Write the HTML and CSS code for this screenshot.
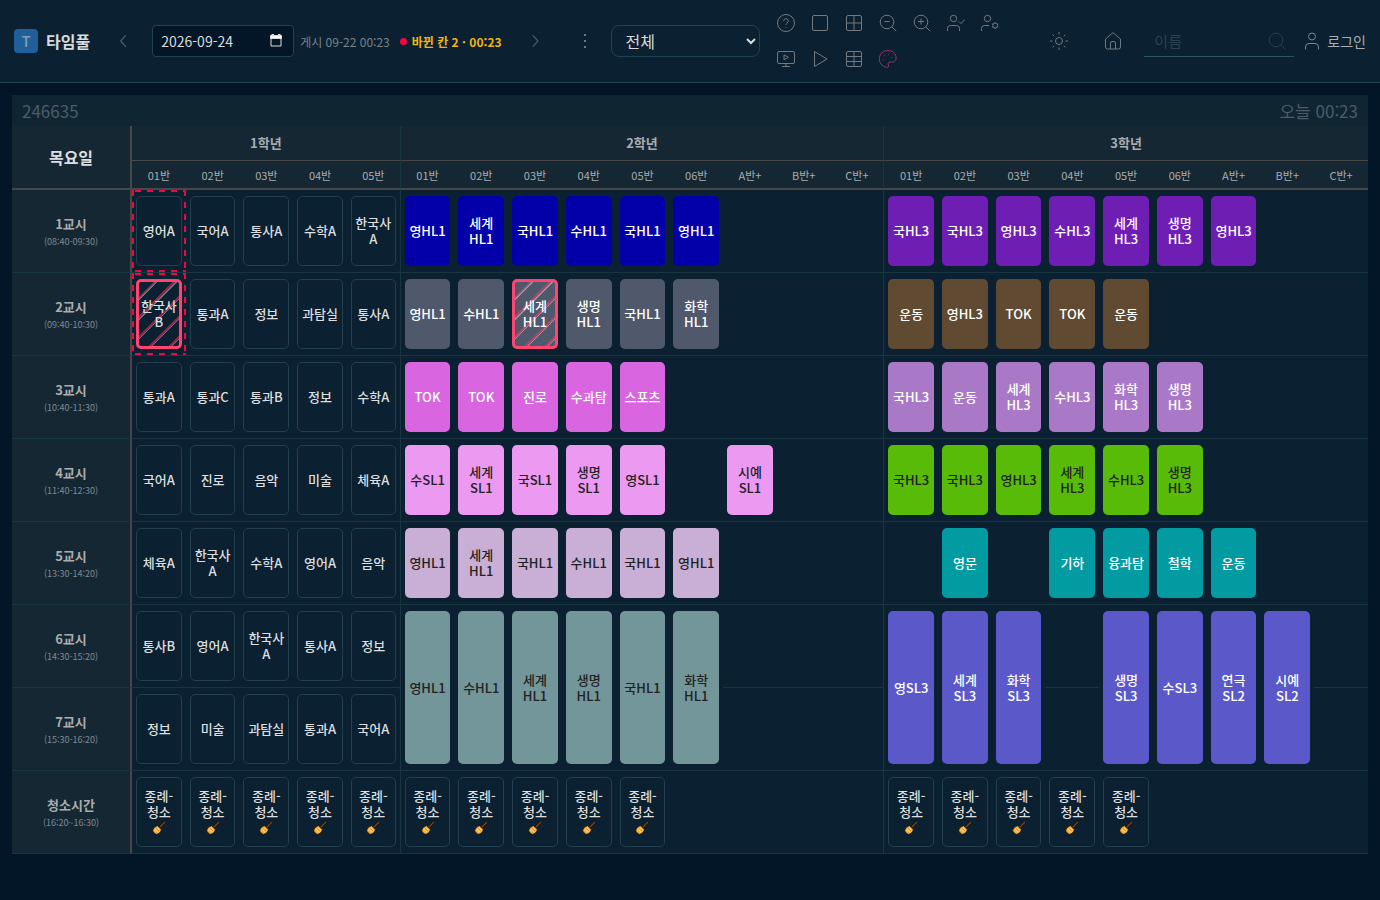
FILE: index.html
```html
<!DOCTYPE html>
<html lang="ko">
<head>
<meta charset="utf-8">
<meta name="viewport" content="width=device-width, initial-scale=1">
<title>타임풀</title>
<link rel="stylesheet" href="styles.css">
</head>
<body>
<svg class="defs" aria-hidden="true">
  <symbol id="broom" viewBox="0 0 14 14"><path d="M7.500 6.500 13 1" fill="none" stroke="#1b120b" stroke-width="2.600"/><path d="M7.500 6.500 13 1" fill="none" stroke="#7a4520" stroke-width="1.200"/><path d="M5.500 4.800 9.300 8.500c-.3 2.500-2.600 4.600-4.800 4.800C2.600 12.800 1 11 .7 9.300 1.500 7 3.500 5.300 5.500 4.800z" fill="#f7b43c" stroke="#20160c" stroke-width=".8"/><path d="m4.800 6.300 3 3M3 8l3 3" fill="none" stroke="#ffdc78" stroke-width="1"/><path d="m4 7.200 3 3" fill="none" stroke="#ee8236" stroke-width="1"/></symbol>
</svg>
<header class="topbar">
  <a class="brand" href="#"><span class="logo">T</span><span>타임풀</span></a>
  <div class="datenav">
    <button class="iconbtn" type="button" aria-label="이전"><svg class="arrow" viewBox="0 0 24 24"><path d="M17 2 8 12l9 10"/></svg></button>
    <div class="datebox">
      <input class="date" type="text" value="2026-09-24" aria-label="날짜">
      <button class="pick" type="button" aria-label="달력 열기"><svg viewBox="0 0 12 13"><path d="M1 2h10v10H1z" fill="none" stroke="#dedede"/><path d="M.5 1.500h11v3H.5zM2 0h1.500v2H2zM8.500 0H10v2H8.500z" fill="#fff"/></svg></button>
    </div>
    <span class="posted">게시 09-22 00:23</span>
    <span class="changed">바뀐 칸 2 · 00:23</span>
    <button class="iconbtn next" type="button" aria-label="다음"><svg class="arrow" viewBox="0 0 24 24"><path d="m8 2 9 10-9 10"/></svg></button>
  </div>
  <button class="iconbtn more" type="button" aria-label="더보기"><svg viewBox="0 0 18 18"><path d="M8 2h2v2H8zM8 8h2v2H8zM8 14h2v2H8z" fill="currentColor" stroke="none"/></svg></button>
  <select class="scope" aria-label="보기 범위"><option>전체</option></select>
  <div class="tools">
    <button type="button" aria-label="도움말"><svg viewBox="0 0 18 18"><circle cx="9" cy="9" r="8.500"/><path d="M6.700 7a2.300 2.300 0 1 1 3.500 1.900C9.300 9.500 9 9.900 9 11M9 12.800v.9"/></svg></button>
    <button type="button" aria-label="한 칸 보기"><svg viewBox="0 0 18 18"><rect x="1.500" y="1.500" width="15" height="15" rx="1.500"/></svg></button>
    <button type="button" aria-label="네 칸 보기"><svg viewBox="0 0 18 18"><rect x="1.500" y="1.500" width="15" height="15" rx="1.500"/><path d="M9 1.500v15M1.500 9h15"/></svg></button>
    <button type="button" aria-label="축소"><svg viewBox="0 0 18 18"><circle cx="8" cy="8" r="6.800"/><path d="m12.900 12.900 4.300 4.300M5.500 7.500h5"/></svg></button>
    <button type="button" aria-label="확대"><svg viewBox="0 0 18 18"><circle cx="8" cy="8" r="6.800"/><path d="m12.900 12.900 4.300 4.300M5 7.500h6M8 4.500v6"/></svg></button>
    <button type="button" aria-label="출석"><svg viewBox="0 0 18 18"><circle cx="6.500" cy="4.500" r="3.200"/><path d="M.5 17v-2.500a3 3 0 0 1 3-3h6a3 3 0 0 1 3 3V17M12 7.500l2 2 3.700-4"/></svg></button>
    <button type="button" aria-label="사용자 설정"><svg viewBox="0 0 18 18"><circle cx="6.500" cy="4.500" r="3.200"/><path d="M.5 17v-2.500a3 3 0 0 1 3-3h4.500"/><circle cx="14.200" cy="11.500" r="2.500"/><path d="M14.200 8v1M14.200 14v1M11.200 9.800l1 .6M16.300 12.600l1 .6M11.200 13.200l1-.6M16.300 10.400l1-.6"/></svg></button>
    <button type="button" aria-label="발표 화면"><svg viewBox="0 0 18 18"><rect x=".5" y="1.500" width="17" height="12" rx="1.500"/><path d="M9 13.500v3M5 16.500h8M7 4.800v5l4.300-2.500z"/></svg></button>
    <button type="button" aria-label="재생"><svg viewBox="0 0 18 18"><path d="M3.500 1.500v15L16 9z"/></svg></button>
    <button type="button" aria-label="표 보기"><svg viewBox="0 0 18 18"><rect x="1.500" y="1.500" width="15" height="15" rx="1.500"/><path d="M9 1.500v15M1.500 6.500h15M1.500 11.500h15"/></svg></button>
    <button class="palette" type="button" aria-label="색상"><svg viewBox="0 0 18 18"><path d="M9 .5a8.500 8.500 0 0 0-1.500 16.900c1.200.2 2-.3 2-1.400 0-1.400-1-2.800.4-3.600 1.400-.9 3.600.3 5.500-.9C19.200 8.900 16.700.5 9 .5z"/><path d="M4.200 9.500v1M5.500 5.300v1M9.500 3.800v1M13 7v1"/></svg></button>
  </div>
  <div class="right">
    <button class="iconbtn" type="button" aria-label="밝기"><svg viewBox="0 0 18 18"><circle cx="9" cy="9" r="3.500"/><path d="M9 0v2.500M9 15.500V18M0 9h2.500M15.500 9H18M2.600 2.600l1.600 1.600M13.800 13.800l1.600 1.600M2.600 15.400l1.600-1.600M13.800 4.200l1.600-1.600"/></svg></button>
    <a class="iconbtn home" href="#" aria-label="홈"><svg viewBox="0 0 18 18"><path d="M1.500 7v8a2 2 0 0 0 2 2h11a2 2 0 0 0 2-2V7L9 .700zM6.500 17v-6a1.500 1.500 0 0 1 1.500-1.500h2a1.500 1.500 0 0 1 1.500 1.500v6"/></svg></a>
    <div class="search">
      <input type="text" placeholder="이름" aria-label="이름 검색">
      <svg viewBox="0 0 18 18"><circle cx="8" cy="8" r="6.800"/><path d="m12.900 12.900 4.300 4.300"/></svg>
    </div>
    <a class="login" href="#"><svg viewBox="0 0 14 18"><circle cx="7" cy="4.500" r="3.500"/><path d="M.5 17.500V15a3.500 3.500 0 0 1 3.500-3.500h6a3.500 3.500 0 0 1 3.500 3.500v2.500"/></svg><span>로그인</span></a>
  </div>
</header>

<main class="board">
  <div class="meta"><span>246635</span><span>오늘 00:23</span></div>
  <table class="grid">
    <colgroup><col class="periodcol"><col span="23"></colgroup>
    <thead>
      <tr class="grades"><th class="day" rowspan="2">목요일</th><th class="end" colspan="5">1학년</th><th class="end" colspan="9">2학년</th><th colspan="9">3학년</th></tr>
      <tr class="classes"><th>01반</th><th>02반</th><th>03반</th><th>04반</th><th class="end">05반</th><th>01반</th><th>02반</th><th>03반</th><th>04반</th><th>05반</th><th>06반</th><th>A반+</th><th>B반+</th><th class="end">C반+</th><th>01반</th><th>02반</th><th>03반</th><th>04반</th><th>05반</th><th>06반</th><th>A반+</th><th>B반+</th><th>C반+</th></tr>
    </thead>
    <tbody>
      <tr>
        <th>1교시<small>(08:40-09:30)</small></th>
        <td class="mark"><div class="card">영어A</div></td><td><div class="card">국어A</div></td><td><div class="card">통사A</div></td><td><div class="card">수학A</div></td><td class="end"><div class="card">한국사<br>A</div></td>
        <td><div class="card blue">영HL1</div></td><td><div class="card blue">세계<br>HL1</div></td><td><div class="card blue">국HL1</div></td><td><div class="card blue">수HL1</div></td><td><div class="card blue">국HL1</div></td><td><div class="card blue">영HL1</div></td><td></td><td></td><td class="end"></td>
        <td><div class="card purple">국HL3</div></td><td><div class="card purple">국HL3</div></td><td><div class="card purple">영HL3</div></td><td><div class="card purple">수HL3</div></td><td><div class="card purple">세계<br>HL3</div></td><td><div class="card purple">생명<br>HL3</div></td><td><div class="card purple">영HL3</div></td><td></td><td></td>
      </tr>
      <tr>
        <th>2교시<small>(09:40-10:30)</small></th>
        <td class="mark"><div class="card swapped">한국사<br>B</div></td><td><div class="card">통과A</div></td><td><div class="card">정보</div></td><td><div class="card">과탐실</div></td><td class="end"><div class="card">통사A</div></td>
        <td><div class="card slate">영HL1</div></td><td><div class="card slate">수HL1</div></td><td><div class="card slate swapped">세계<br>HL1</div></td><td><div class="card slate">생명<br>HL1</div></td><td><div class="card slate">국HL1</div></td><td><div class="card slate">화학<br>HL1</div></td><td></td><td></td><td class="end"></td>
        <td><div class="card brown">운동</div></td><td><div class="card brown">영HL3</div></td><td><div class="card brown">TOK</div></td><td><div class="card brown">TOK</div></td><td><div class="card brown">운동</div></td><td></td><td></td><td></td><td></td>
      </tr>
      <tr>
        <th>3교시<small>(10:40-11:30)</small></th>
        <td><div class="card">통과A</div></td><td><div class="card">통과C</div></td><td><div class="card">통과B</div></td><td><div class="card">정보</div></td><td class="end"><div class="card">수학A</div></td>
        <td><div class="card orchid">TOK</div></td><td><div class="card orchid">TOK</div></td><td><div class="card orchid">진로</div></td><td><div class="card orchid">수과탐</div></td><td><div class="card orchid">스포츠</div></td><td></td><td></td><td></td><td class="end"></td>
        <td><div class="card violet">국HL3</div></td><td><div class="card violet">운동</div></td><td><div class="card violet">세계<br>HL3</div></td><td><div class="card violet">수HL3</div></td><td><div class="card violet">화학<br>HL3</div></td><td><div class="card violet">생명<br>HL3</div></td><td></td><td></td><td></td>
      </tr>
      <tr>
        <th>4교시<small>(11:40-12:30)</small></th>
        <td><div class="card">국어A</div></td><td><div class="card">진로</div></td><td><div class="card">음악</div></td><td><div class="card">미술</div></td><td class="end"><div class="card">체육A</div></td>
        <td><div class="card pink">수SL1</div></td><td><div class="card pink">세계<br>SL1</div></td><td><div class="card pink">국SL1</div></td><td><div class="card pink">생명<br>SL1</div></td><td><div class="card pink">영SL1</div></td><td></td><td><div class="card pink">시예<br>SL1</div></td><td></td><td class="end"></td>
        <td><div class="card green">국HL3</div></td><td><div class="card green">국HL3</div></td><td><div class="card green">영HL3</div></td><td><div class="card green">세계<br>HL3</div></td><td><div class="card green">수HL3</div></td><td><div class="card green">생명<br>HL3</div></td><td></td><td></td><td></td>
      </tr>
      <tr>
        <th>5교시<small>(13:30-14:20)</small></th>
        <td><div class="card">체육A</div></td><td><div class="card">한국사<br>A</div></td><td><div class="card">수학A</div></td><td><div class="card">영어A</div></td><td class="end"><div class="card">음악</div></td>
        <td><div class="card mauve">영HL1</div></td><td><div class="card mauve">세계<br>HL1</div></td><td><div class="card mauve">국HL1</div></td><td><div class="card mauve">수HL1</div></td><td><div class="card mauve">국HL1</div></td><td><div class="card mauve">영HL1</div></td><td></td><td></td><td class="end"></td>
        <td></td><td><div class="card teal">영문</div></td><td></td><td><div class="card teal">기하</div></td><td><div class="card teal">융과탐</div></td><td><div class="card teal">철학</div></td><td><div class="card teal">운동</div></td><td></td><td></td>
      </tr>
      <tr>
        <th>6교시<small>(14:30-15:20)</small></th>
        <td><div class="card">통사B</div></td><td><div class="card">영어A</div></td><td><div class="card">한국사<br>A</div></td><td><div class="card">통사A</div></td><td class="end"><div class="card">정보</div></td>
        <td rowspan="2"><div class="card sage tall">영HL1</div></td><td rowspan="2"><div class="card sage tall">수HL1</div></td><td rowspan="2"><div class="card sage tall">세계<br>HL1</div></td><td rowspan="2"><div class="card sage tall">생명<br>HL1</div></td><td rowspan="2"><div class="card sage tall">국HL1</div></td><td rowspan="2"><div class="card sage tall">화학<br>HL1</div></td><td></td><td></td><td class="end"></td>
        <td rowspan="2"><div class="card indigo tall">영SL3</div></td><td rowspan="2"><div class="card indigo tall">세계<br>SL3</div></td><td rowspan="2"><div class="card indigo tall">화학<br>SL3</div></td><td></td><td rowspan="2"><div class="card indigo tall">생명<br>SL3</div></td><td rowspan="2"><div class="card indigo tall">수SL3</div></td><td rowspan="2"><div class="card indigo tall">연극<br>SL2</div></td><td rowspan="2"><div class="card indigo tall">시예<br>SL2</div></td><td></td>
      </tr>
      <tr>
        <th>7교시<small>(15:30-16:20)</small></th>
        <td><div class="card">정보</div></td><td><div class="card">미술</div></td><td><div class="card">과탐실</div></td><td><div class="card">통과A</div></td><td class="end"><div class="card">국어A</div></td>
        <td></td><td></td><td class="end"></td>
        <td></td><td></td>
      </tr>
      <tr>
        <th>청소시간<small>(16:20~16:30)</small></th>
        <td><div class="card">종례-<br>청소<svg><use href="#broom"/></svg></div></td><td><div class="card">종례-<br>청소<svg><use href="#broom"/></svg></div></td><td><div class="card">종례-<br>청소<svg><use href="#broom"/></svg></div></td><td><div class="card">종례-<br>청소<svg><use href="#broom"/></svg></div></td><td class="end"><div class="card">종례-<br>청소<svg><use href="#broom"/></svg></div></td>
        <td><div class="card">종례-<br>청소<svg><use href="#broom"/></svg></div></td><td><div class="card">종례-<br>청소<svg><use href="#broom"/></svg></div></td><td><div class="card">종례-<br>청소<svg><use href="#broom"/></svg></div></td><td><div class="card">종례-<br>청소<svg><use href="#broom"/></svg></div></td><td><div class="card">종례-<br>청소<svg><use href="#broom"/></svg></div></td><td></td><td></td><td></td><td class="end"></td>
        <td><div class="card">종례-<br>청소<svg><use href="#broom"/></svg></div></td><td><div class="card">종례-<br>청소<svg><use href="#broom"/></svg></div></td><td><div class="card">종례-<br>청소<svg><use href="#broom"/></svg></div></td><td><div class="card">종례-<br>청소<svg><use href="#broom"/></svg></div></td><td><div class="card">종례-<br>청소<svg><use href="#broom"/></svg></div></td><td></td><td></td><td></td><td></td>
      </tr>
    </tbody>
  </table>
</main>
</body>
</html>
```
FILE: styles.css
```css
* { box-sizing: border-box; }

body {
  margin: 0;
  background: #021628;
  color: #d9dbdc;
  font-family: "Noto Sans CJK KR", "Noto Sans", sans-serif;
  font-size: 14px;
}

button, input, select { font: inherit; color: inherit; }
button { padding: 0; border: 0; background: none; cursor: pointer; }
a { color: inherit; text-decoration: none; }

svg {
  display: block;
  width: 18px;
  height: 18px;
  fill: none;
  stroke: currentColor;
  stroke-width: 1;
}
.defs { display: none; }

.topbar {
  display: flex;
  align-items: center;
  min-height: 83px;
  padding: 5px 14px;
  background: #0b2030;
  border-bottom: 1px solid #1f4450;
  white-space: nowrap;
}

.brand { display: flex; align-items: center; gap: 8px; font-size: 16px; font-weight: 700; }
.logo {
  display: grid;
  place-items: center;
  width: 24px;
  height: 24px;
  border-radius: 4px;
  background: #1f5f9b;
  color: #8d9baa;
  font-size: 15px;
  font-weight: 500;
  line-height: 24px;
}

.iconbtn {
  display: grid;
  place-items: center;
  width: 30px;
  height: 32px;
  color: #6c7881;
}
.arrow { width: 14px; height: 14px; stroke-width: 2; }
.datenav .iconbtn { color: #4f5f6a; }

.datenav { display: flex; align-items: center; margin-left: 18px; }
.datebox { position: relative; margin: 0 6px 0 14px; }
.date {
  display: block;
  width: 142px;
  height: 32px;
  padding: 0 30px 0 8px;
  border: 1px solid #1f4450;
  border-radius: 4px;
  background: #021628;
}
.pick { position: absolute; right: 12px; top: 9px; }
.pick svg { width: 12px; height: 13px; }
.posted { color: #78838b; font-size: 12px; }
.changed {
  display: flex;
  align-items: center;
  gap: 5px;
  margin-left: 10px;
  color: #f0b414;
  font-size: 12px;
  font-weight: 700;
}
.changed::before { content: ""; width: 7px; height: 7px; border-radius: 50%; background: #f5053f; }
.next { margin-left: 18px; }
.more { margin-left: 20px; }

.scope {
  width: 149px;
  height: 32px;
  margin-left: 11px;
  padding: 0 0 0 10px;
  border: 1px solid #1f4450;
  border-radius: 8px;
  background: #0b2030;
  font-size: 16px;
}

.tools { display: grid; grid-template-columns: repeat(7, 34px); margin-left: 9px; }
.tools button { display: grid; place-items: center; height: 36px; color: #74797d; }
.tools .palette { color: #9c2f70; }

.right { display: flex; align-items: center; margin-left: auto; }
.home { margin: 0 16px 0 24px; }
.search {
  display: flex;
  align-items: center;
  width: 150px;
  height: 32px;
  padding: 0 8px 0 10px;
  border-bottom: 1px solid #2a5560;
  color: #29434f;
}
.search input { flex: 1; min-width: 0; padding: 0; border: 0; outline: 0; background: none; font-size: 15px; }
.search input::placeholder { color: #29434f; }
.login { display: flex; align-items: center; gap: 8px; margin-left: 11px; color: #a9adaf; }
.login svg { width: 14px; color: #7d858b; }

.board { margin: 12px; }
.meta {
  display: flex;
  justify-content: space-between;
  height: 31px;
  padding: 0 10px;
  background: #0f2532;
  color: #4c5c68;
  font-size: 17px;
  line-height: 31px;
}

.grid {
  width: 100%;
  border-collapse: separate;
  border-spacing: 0;
  table-layout: fixed;
  background: #0b2030;
}
.periodcol { width: 120px; }
.grid th, .grid td { padding: 0; }
.grid td, .grid tbody th { height: 83px; border-bottom: 1px solid #193541; }
.grid td { padding: 6px 4px; vertical-align: top; }
.grid .end { border-right: 1px solid #193541; }

.grid th { background: #152733; color: #a9adaf; font-size: 13px; line-height: 20px; }
.grid tbody th, .grid .day { border-right: 2px solid #474747; }
.grid tbody th { padding-top: 2px; }
.grid .day { border-bottom: 2px solid #474747; color: #dcdedf; font-size: 16px; }
.grades th { height: 35px; border-bottom: 1px solid #474747; }
.grid .classes th { height: 29px; border-bottom: 2px solid #474747; font-size: 11px; font-weight: 400; line-height: 18px; }
.grid small { display: block; color: #7f8991; font-size: 9px; font-weight: 400; line-height: 16px; }

.card {
  display: grid;
  place-content: center;
  height: 70px;
  border: 1px solid #213f4c;
  border-radius: 5px;
  color: #dcdedf;
  font-size: 13px;
  font-weight: 500;
  line-height: 16px;
  text-align: center;
}
.card svg { width: 14px; height: 14px; margin: 1px auto; stroke: none; }
.tall { height: 153px; }
.blue, .purple, .slate, .brown, .orchid, .violet, .pink, .green, .mauve, .teal, .sage, .indigo { border: 0; color: #fff; }
.blue { background: #0400a9; }
.purple { background: #6f1eb4; }
.slate { background: #50586c; }
.brown { background: #604b32; }
.orchid { background: #d965e1; }
.violet { background: #a979c8; }
.pink { background: #ec99f2; color: #222; }
.green { background: #57bb08; color: #222; }
.mauve { background: #c9afd5; color: #222; }
.teal { background: #029ba1; }
.sage { background: #73969a; color: #222; }
.indigo { background: #5b59ca; }

/* dashed frame round a changed cell */
.mark {
  --across: repeating-linear-gradient(90deg, transparent 0 3px, #f5053f 3px 9px, transparent 9px 12px);
  --down: repeating-linear-gradient(180deg, #f5053f 0 6px, transparent 6px 12px);
  background:
    var(--across) top / 100% 2px no-repeat,
    var(--across) bottom / 100% 2px no-repeat,
    var(--down) left / 2px 100% no-repeat,
    var(--down) right / 2px 100% no-repeat;
}
.swapped {
  border: 3px solid #ff4570;
  background-image: repeating-linear-gradient(135deg, transparent 0 10px, #ff457070 10px 12px, #ffffff60 12px 13px, transparent 13px 14px);
}
```
